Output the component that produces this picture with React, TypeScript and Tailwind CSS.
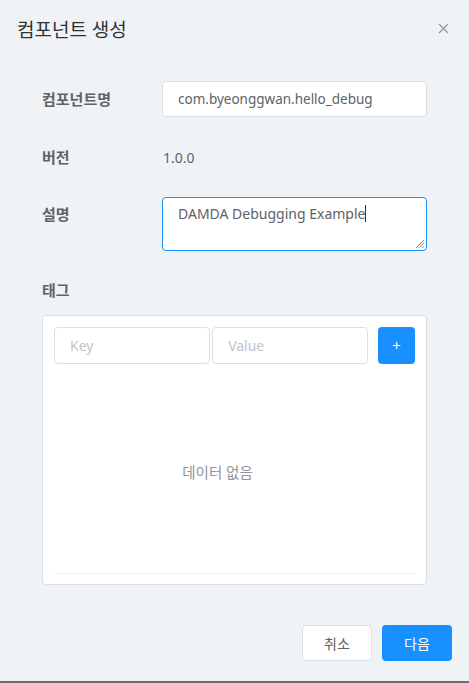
import React from "react";

const font = { fontFamily: '"Noto Sans", "Noto Sans CJK KR", sans-serif' };

export default function App() {
  return (
    <div className="w-[469px] h-[683px] bg-[#f0f3f6] flex flex-col text-[#606266]" style={font}>
      {/* Header */}
      <div className="flex items-center justify-between pl-[17px] pr-[20px] pt-[16px] h-[44px]">
        <h2 className="text-[19px] leading-[24px] text-[#303133]">컴포넌트 생성</h2>
        <svg width="11" height="11" viewBox="0 0 11 11" className="mt-[-4px]">
          <path d="M1 1L10 10M10 1L1 10" stroke="#9a9a9a" strokeWidth="1.3" />
        </svg>
      </div>

      {/* Form */}
      <div className="flex flex-col pl-[42px] pr-[42px] pt-[37px]">
        <div className="flex items-center h-[36px]">
          <label className="w-[120px] text-[15px] font-bold text-[#606266]">컴포넌트명</label>
          <div className="w-[265px] h-[36px] bg-white border border-[#dcdfe6] rounded-[4px] flex items-center px-[15px] text-[13.5px] text-[#606266]">
            com.byeonggwan.hello_debug
          </div>
        </div>

        <div className="flex items-center h-[36px] mt-[22px]">
          <label className="w-[120px] text-[15px] font-bold text-[#606266]">버전</label>
          <span className="text-[14px] text-[#606266] pl-[1px]">1.0.0</span>
        </div>

        <div className="flex items-start mt-[22px]">
          <label className="w-[120px] text-[15px] font-bold text-[#606266] pt-[6px]">설명</label>
          <div className="relative w-[265px] h-[54px] bg-white border border-[#1890ff] rounded-[4px] px-[15px] pt-[5px] text-[14px] text-[#606266]">
            <span>DAMDA Debugging Example</span>
            <span className="inline-block w-px h-[17px] bg-[#303133] align-middle -mt-[3px]" />
            <svg width="11" height="11" viewBox="0 0 11 11" className="absolute right-[1px] bottom-[1px]">
              <path d="M10 2L2 10M10 5L5 10M10 8L8 10" stroke="#909090" strokeWidth="1" />
            </svg>
          </div>
        </div>

        <div className="flex items-center h-[36px] mt-[21px]">
          <label className="text-[15px] font-bold text-[#606266]">태그</label>
        </div>
      </div>

      {/* Tag box */}
      <div className="ml-[42px] mt-[7px] w-[385px] h-[270px] bg-white border border-[#dcdfe6] rounded-[4px] flex flex-col px-[11px] pt-[11px] pb-[10px]">
        <div className="flex items-center">
          <div className="w-[157px] h-[37px] border border-[#dcdfe6] rounded-[4px] flex items-center px-[15px] text-[14px] text-[#c0c4cc]">
            Key
          </div>
          <div className="w-[157px] h-[37px] ml-[2px] border border-[#dcdfe6] rounded-[4px] flex items-center px-[15px] text-[14px] text-[#c0c4cc]">
            Value
          </div>
          <div className="w-[37px] h-[37px] ml-[10px] bg-[#1890ff] rounded-[4px] flex items-center justify-center text-white text-[15px]">
            +
          </div>
        </div>
        <div className="flex-1 flex items-center justify-center text-[14.5px] text-[#909399] pt-[8px] pr-[34px]">
          데이터 없음
        </div>
        <div className="h-px bg-[#ebeef5]" />
      </div>

      {/* Footer */}
      <div className="flex justify-end gap-[10px] pr-[17px] mt-[40px]">
        <button className="w-[70px] h-[36px] bg-white border border-[#dcdfe6] rounded-[4px] text-[14px] text-[#606266]">
          취소
        </button>
        <button className="w-[70px] h-[36px] bg-[#1890ff] rounded-[4px] text-[14px] text-white">
          다음
        </button>
      </div>

      <div className="flex-1" />
      <div className="h-[2px] bg-[#6b6b6b]" />
    </div>
  );
}
